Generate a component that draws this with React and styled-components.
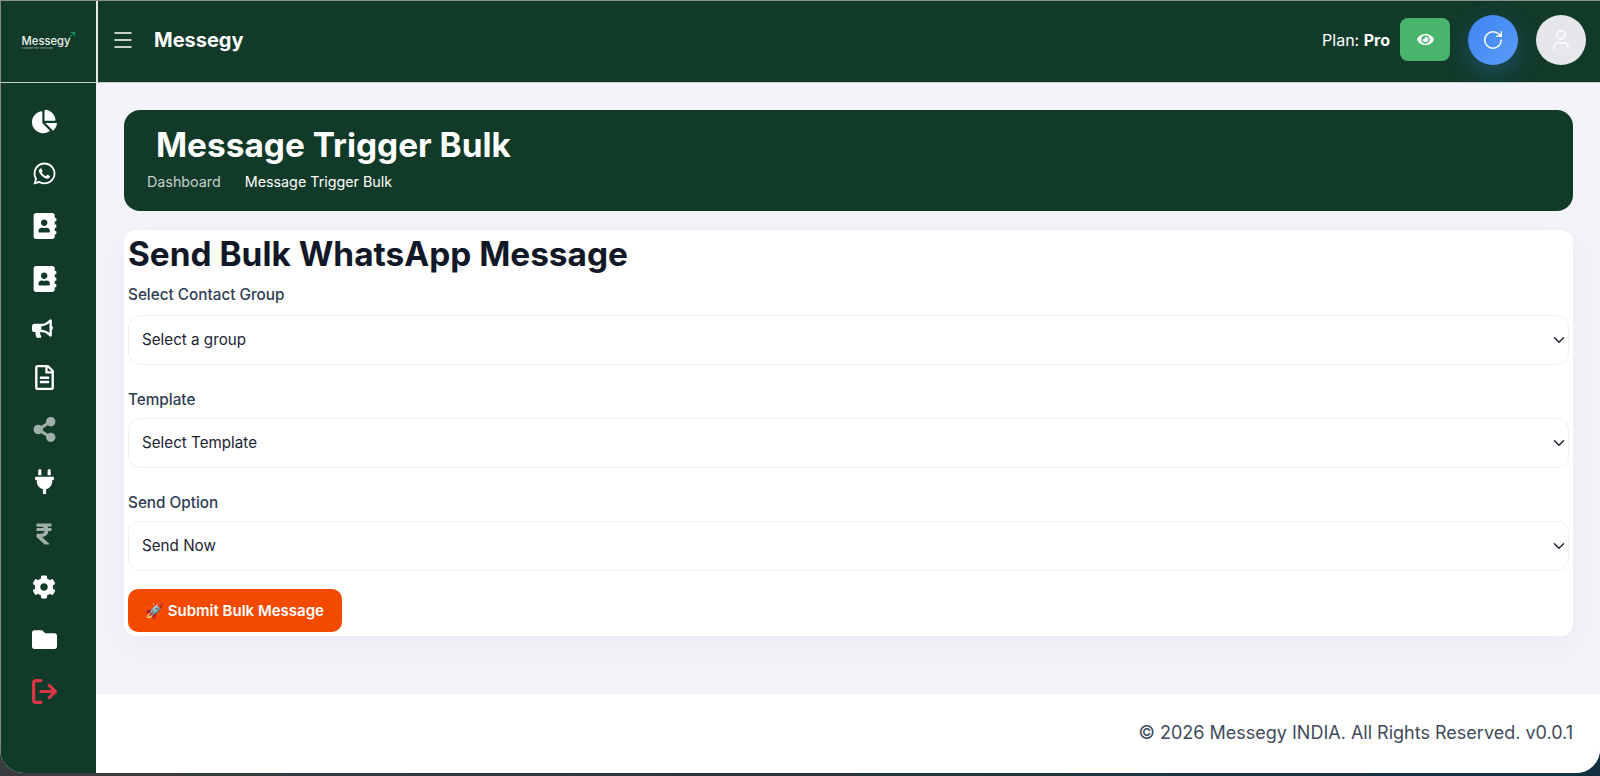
import React from 'react';
import styled, { createGlobalStyle } from 'styled-components';
import {
  FaChartPie, FaWhatsapp, FaAddressBook, FaBullhorn, FaRegFileAlt, FaShareAlt,
  FaPlug, FaRupeeSign, FaCog, FaFolder, FaEye,
} from 'react-icons/fa';
import { Menu, RotateCw, User, LogOut, ChevronDown } from 'lucide-react';

const GREEN = '#113a29';

const GlobalStyle = createGlobalStyle`
  html, body {
    margin: 0;
    height: 776px;
    overflow: hidden;
    background: linear-gradient(90deg, #3a3d3f, #123040);
    font-family: Inter, "Liberation Sans", sans-serif;
  }
  * { box-sizing: border-box; }
`;

const Shell = styled.div`
  width: 1600px;
  height: 773px;
  display: grid;
  grid-template-columns: 96px 1fr;
  grid-template-rows: 82px 1fr;
  border-radius: 0 0 24px 24px;
  overflow: hidden;
  background: #fff;
  border-top: 1px solid #8a8f8c;
`;

const LogoCell = styled.div`
  background: ${GREEN};
  border-bottom: 1px solid #c9d1cc;
  border-left: 1px solid #7f8a84;
  display: flex;
  align-items: center;
  justify-content: center;
`;

const LogoText = styled.div`
  position: relative;
  color: #eef2f0;
  font-size: 11.2px;
  font-weight: 500;
  line-height: 11px;
  padding-top: 3px;
  margin-right: 5px;
  small {
    display: block;
    font-size: 2.5px;
    line-height: 3px;
    color: #9fb0a7;
  }
`;

const LogoArrow = styled.svg`
  position: absolute;
  top: -2px;
  right: -6px;
`;

const Header = styled.header`
  background: ${GREEN};
  border-left: 2px solid #e8ecea;
  border-bottom: 1px solid #c9d1cc;
  display: flex;
  align-items: center;
  padding: 0 14px 4px 13px;
`;

const Brand = styled.div`
  margin-left: 19px;
  color: #fff;
  font-size: 20px;
  font-weight: 700;
`;

const HeaderRight = styled.div`
  margin-left: auto;
  display: flex;
  align-items: center;
`;

const Plan = styled.div`
  color: #fff;
  font-size: 16px;
  margin-right: 10px;
  b { font-weight: 700; }
`;

const EyeButton = styled.div`
  width: 50px;
  height: 43px;
  border-radius: 8px;
  background: #48b46c;
  color: #fff;
  display: flex;
  align-items: center;
  justify-content: center;
  font-size: 17px;
  margin-right: 18px;
`;

const RoundButton = styled.div`
  width: 50px;
  height: 50px;
  border-radius: 50%;
  display: flex;
  align-items: center;
  justify-content: center;
  color: #fff;
  background: ${p => p.$bg};
  box-shadow: ${p => p.$glow ? '0 8px 24px rgba(59,130,246,0.3)' : 'none'};
  margin-left: ${p => p.$gap || 0}px;
`;

const Sidebar = styled.nav`
  background: ${GREEN};
  border-left: 1px solid #7f8a84;
  display: flex;
  flex-direction: column;
  align-items: flex-start;
  gap: 27px;
  padding: 26px 0 0 31px;
`;

const NavIcon = styled.div`
  height: ${p => p.$height || p.$size || 25}px;
  display: flex;
  align-items: center;
  font-size: ${p => p.$size || 25}px;
  color: ${p => p.$color || '#fff'};
  opacity: ${p => p.$dim ? 0.6 : 1};
  svg { flex-shrink: 0; }
`;

const LogoutIcon = styled(LogOut)`
  margin-left: -2px;
`;

const Main = styled.div`
  display: flex;
  flex-direction: column;
  min-height: 0;
`;

const Content = styled.main`
  flex: 1;
  background: #f3f4f9;
  padding: 27px 27px 0 28px;
`;

const Banner = styled.section`
  height: 101px;
  border-radius: 16px;
  background: ${GREEN};
  padding: 15px 23px 0 23px;
  margin-bottom: 19px;
`;

const BannerTitle = styled.h1`
  margin: 0 0 0 9px;
  color: #fff;
  font-size: 33.4px;
  line-height: 40px;
  font-weight: 700;
`;

const Crumbs = styled.div`
  margin-top: 8px;
  display: flex;
  font-size: 14.3px;
  line-height: 18px;
  color: #fff;
  span:first-child {
    color: #c5cec9;
    margin-right: 24px;
  }
`;

const Card = styled.section`
  height: 406px;
  background: #fff;
  border-radius: 12px;
  padding: 4px 4px 0;
  box-shadow: 0 10px 30px rgba(60, 70, 110, 0.05);
`;

const CardTitle = styled.h2`
  margin: 0 0 11px;
  color: #111827;
  font-size: 33.4px;
  line-height: 41px;
  font-weight: 700;
`;

const Label = styled.label`
  display: block;
  color: #2f3d55;
  font-size: 15.3px;
  line-height: 18px;
  font-weight: 500;
  margin-bottom: 9px;
`;

const Field = styled.div`
  margin-bottom: 26px;
  &:first-of-type ${Label} { margin-bottom: 11px; }
  &:nth-of-type(3) { margin-bottom: 18px; }
`;

const SelectWrap = styled.div`
  position: relative;
  svg {
    position: absolute;
    right: 1px;
    top: 16px;
    color: #1f2937;
    pointer-events: none;
  }
`;

const Select = styled.select`
  appearance: none;
  width: 100%;
  height: 50px;
  border: 1px solid #eff0f3;
  border-radius: 12px;
  background: #fff;
  padding: 0 13px 2px;
  font-family: inherit;
  font-size: 15.2px;
  color: #1c2434;
`;

const SubmitButton = styled.button`
  height: 43px;
  width: 214px;
  border: 0;
  border-radius: 10px;
  background: #f34a00;
  color: #fff;
  font-family: inherit;
  font-size: 15px;
  font-weight: 600;
  padding: 0 1px 0 0;
`;

const Footer = styled.footer`
  height: 79px;
  background: #fff;
  color: #3f4a5c;
  font-size: 18px;
  display: flex;
  justify-content: flex-end;
  padding: 28px 27px 0 0;
`;

const FormField = ({ label, value }) => (
  <Field>
    <Label>{label}</Label>
    <SelectWrap>
      <Select defaultValue={value}>
        <option>{value}</option>
      </Select>
      <ChevronDown size={18} strokeWidth={2} />
    </SelectWrap>
  </Field>
);

const navItems = [
  { icon: <FaChartPie /> },
  { icon: <FaWhatsapp /> },
  { icon: <FaAddressBook />, size: 26 },
  { icon: <FaAddressBook />, size: 26 },
  { icon: <FaBullhorn />, size: 21, height: 19 },
  { icon: <FaRegFileAlt /> },
  { icon: <FaShareAlt />, dim: true },
  { icon: <FaPlug /> },
  { icon: <FaRupeeSign />, size: 24, height: 26, dim: true },
  { icon: <FaCog />, size: 24, height: 26 },
  { icon: <FaFolder /> },
  { icon: <LogoutIcon size={29} strokeWidth={2.6} />, color: '#dc3545' },
];

const App = () => (
  <>
    <GlobalStyle />
    <Shell>
      <LogoCell>
        <LogoText>
          Messegy
          <small>Automate Your Work Flow</small>
          <LogoArrow width="8" height="8" viewBox="0 0 8 8" fill="none" stroke="#1f9d6a" strokeWidth="1">
            <path d="M1 7 L6 2 M3 1.5 H6.5 V5" />
          </LogoArrow>
        </LogoText>
      </LogoCell>
      <Header>
        <Menu size={24} color="#fff" strokeWidth={1.6} />
        <Brand>Messegy</Brand>
        <HeaderRight>
          <Plan>Plan: <b>Pro</b></Plan>
          <EyeButton><FaEye /></EyeButton>
          <RoundButton $bg="linear-gradient(135deg,#3f85f3,#5a9cf8)" $glow>
            <RotateCw size={22} strokeWidth={1.6} />
          </RoundButton>
          <RoundButton $bg="#e5e7eb" $gap={18}>
            <User size={24} strokeWidth={1.4} />
          </RoundButton>
        </HeaderRight>
      </Header>
      <Sidebar>
        {navItems.map((item, i) => (
          <NavIcon key={i} $color={item.color} $dim={item.dim} $size={item.size} $height={item.height}>
            {item.icon}
          </NavIcon>
        ))}
      </Sidebar>
      <Main>
        <Content>
          <Banner>
            <BannerTitle>Message Trigger Bulk</BannerTitle>
            <Crumbs>
              <span>Dashboard</span>
              <span>Message Trigger Bulk</span>
            </Crumbs>
          </Banner>
          <Card>
            <CardTitle>Send Bulk WhatsApp Message</CardTitle>
            <FormField label="Select Contact Group" value="Select a group" />
            <FormField label="Template" value="Select Template" />
            <FormField label="Send Option" value="Send Now" />
            <SubmitButton>🚀 Submit Bulk Message</SubmitButton>
          </Card>
        </Content>
        <Footer>© 2026 Messegy INDIA. All Rights Reserved. v0.0.1</Footer>
      </Main>
    </Shell>
  </>
);

export default App;
